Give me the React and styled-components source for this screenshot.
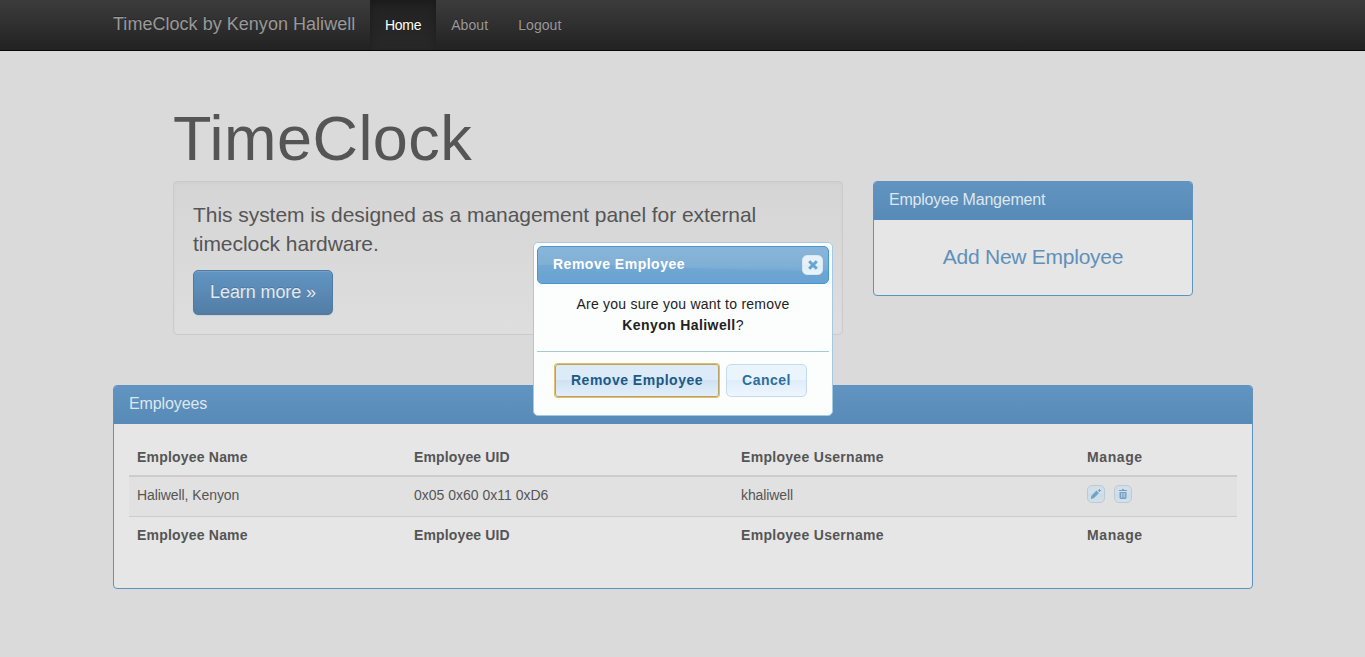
import React from "react";
import styled, { createGlobalStyle } from "styled-components";

const GlobalStyle = createGlobalStyle`
  * { box-sizing: border-box; }
  body {
    margin: 0;
    background: #dadada;
    color: #555;
    font: 14px/20px "Liberation Sans", Arial, sans-serif;
    overflow: hidden;
  }
  a { text-decoration: none; color: inherit; }
`;

const Navbar = styled.nav`
  display: flex;
  height: 51px;
  padding-left: 113px;
  background: linear-gradient(#3c3c3c, #222);
  border-bottom: 1px solid #080808;
`;

const Brand = styled.a`
  width: 257px;
  padding-top: 14px;
  font-size: 18px;
  letter-spacing: 0.03px;
  color: #999;
  white-space: nowrap;
  text-shadow: 0 -1px 0 rgba(0, 0, 0, 0.25);
`;

const NavLink = styled.a`
  height: 50px;
  padding: 15px 15px 0;
  letter-spacing: ${(p) => p.$spacing || 0}px;
  color: ${(p) => (p.$active ? "#fff" : "#999")};
  background: ${(p) => (p.$active ? "linear-gradient(#222, #282828)" : "none")};
  box-shadow: ${(p) => (p.$active ? "inset 0 3px 9px rgba(0, 0, 0, 0.25)" : "none")};
  text-shadow: 0 -1px 0 rgba(0, 0, 0, 0.25);
`;

const Page = styled.main`
  padding: 56px 112px 0 113px;
`;

const Hero = styled.section`
  padding: 0 60px;
`;

const Title = styled.h1`
  margin: 0 0 11px;
  font-size: 63px;
  font-weight: 400;
  line-height: 63px;
  letter-spacing: 0.45px;
`;

const Columns = styled.div`
  display: grid;
  grid-template-columns: 670px 320px;
  gap: 30px;
  align-items: start;
`;

const Well = styled.div`
  height: 154px;
  padding: 18px 19px 19px;
  border: 1px solid #cbcbcb;
  border-radius: 4px;
  background: linear-gradient(#d5d5d5, #dedede);
  box-shadow: inset 0 1px 3px rgba(0, 0, 0, 0.04);
`;

const Lead = styled.p`
  width: 600px;
  margin: 0 0 12px;
  font-size: 21px;
  line-height: 29px;
  letter-spacing: -0.05px;
`;

const LearnMore = styled.a`
  display: block;
  width: 140px;
  height: 45px;
  border: 1px solid #4d7ba3;
  border-radius: 5px;
  background: linear-gradient(#6295c3, #527da5);
  box-shadow: inset 0 1px 0 rgba(255, 255, 255, 0.12), 0 1px 1px rgba(0, 0, 0, 0.06);
  color: #e4e9ee;
  font-size: 18px;
  line-height: 43px;
  letter-spacing: -0.1px;
  text-align: center;
  text-shadow: 0 -1px 0 rgba(0, 0, 0, 0.18);
`;

const Panel = styled.section`
  height: ${(p) => p.$height}px;
  border: 1px solid #5f92bd;
  border-radius: 4px;
  background: #e6e6e6;
  overflow: hidden;
`;

const PanelHeading = styled.h3`
  height: 38px;
  margin: 0;
  padding: 8px 15px 0;
  background: linear-gradient(#6194c1, #578ab7);
  color: #dfe7ee;
  font-size: 16px;
  font-weight: 400;
  line-height: 20px;
  letter-spacing: ${(p) => p.$spacing || 0}px;
`;

const AddLink = styled.a`
  display: block;
  padding-top: 22px;
  color: #6090ba;
  font-size: 21px;
  line-height: 30px;
  letter-spacing: -0.25px;
  text-align: center;
`;

const EmployeePanel = styled.div`
  margin-top: 50px;
`;

const Table = styled.div`
  margin: 15px 15px 0;
`;

const Row = styled.div`
  display: grid;
  grid-template-columns: 277px 327px 346px 158px;
  height: ${(p) => (p.$striped ? 40 : 38)}px;
  padding-top: 8px;
  font-weight: ${(p) => (p.$striped ? 400 : 700)};
  background: ${(p) => (p.$striped ? "#e1e1e1" : "transparent")};
  border-bottom: ${(p) => p.$rule || 0}px solid #cccccc;
`;

const Cell = styled.div`
  padding: 0 8px;
  letter-spacing: ${(p) => p.$spacing || 0}px;
  white-space: nowrap;
`;

const Actions = styled(Cell)`
  display: flex;
  gap: 9px;
`;

const IconButton = styled.button`
  display: grid;
  place-items: center;
  width: 18px;
  height: 18px;
  padding: 0;
  border: 1px solid #b8cbd9;
  border-radius: 5px;
  background: linear-gradient(#d3dfe8 50%, #cbdce8 50%, #d4e0e9);
  color: #74a1c6;
`;

const Dialog = styled.div`
  position: fixed;
  left: 533px;
  top: 242px;
  width: 300px;
  height: 174px;
  padding: 3px;
  border: 1px solid #a6c9e2;
  border-radius: 5px;
  background: #fcfdfd;
  color: #222;
`;

const DialogTitle = styled.div`
  position: relative;
  display: flex;
  justify-content: space-between;
  height: 38px;
  padding: 7px 5px 0 15px;
  border: 1px solid #4297d7;
  border-radius: 5px;
  background: linear-gradient(#8ab5d9, #80b0d6 50%, #6fa7d3 75%, #6da5d2);
  color: #fff;
  font-weight: 700;
  letter-spacing: 0.5px;
  overflow: hidden;
`;

const Gloss = styled.svg`
  position: absolute;
  inset: 0;
  width: 100%;
  height: 100%;
`;

const TitleText = styled.span`
  position: relative;
`;

const CloseButton = styled.button`
  position: relative;
  display: grid;
  place-items: center;
  width: 21px;
  height: 20px;
  margin-top: 1px;
  padding: 0 0 0 1px;
  border: 1px solid #d5e7f5;
  border-radius: 5px;
  background: linear-gradient(#e7f1fa 50%, #deedf9 50%, #eaf4fc);
  color: #68a4d2;
`;

const Message = styled.p`
  height: 67px;
  margin: 0;
  padding-top: 10px;
  line-height: 21px;
  letter-spacing: 0.25px;
  text-align: center;

  b { letter-spacing: 0.4px; }
`;

const ButtonPane = styled.div`
  display: flex;
  gap: 7px;
  padding: 12px 0 0 18px;
  border-top: 1px solid #a6c9d8;
`;

const DialogButton = styled.button`
  width: ${(p) => p.$width}px;
  height: 33px;
  padding: 0 0 1px;
  border: 1px solid ${(p) => (p.$focused ? "#b5a565" : "#c5dbec")};
  border-radius: ${(p) => (p.$focused ? 3 : 5)}px;
  background: ${(p) =>
    p.$focused
      ? "linear-gradient(#dcebf7 48%, #cfe2f2 50%, #e3effa)"
      : "linear-gradient(#e9f4fd 48%, #deedfa 50%, #eef6fe)"};
  box-shadow: ${(p) => (p.$focused ? "0 0 0 1px #e6bd67" : "none")};
  color: ${(p) => (p.$focused ? "#1d5987" : "#2e6e9e")};
  font: 700 14px/20px "Liberation Sans", Arial, sans-serif;
  letter-spacing: 0.5px;
`;

const PencilIcon = () => (
  <svg width="10" height="10" viewBox="0 0 10 10" fill="currentColor">
    <path d="M0 10V8l1-2 4.5-4.5 2.5 2.5L3.5 8.5 2 9.5zM7 1h1V0h1v1h1v1H9v1H8V2H7z" />
  </svg>
);

const TrashIcon = () => (
  <svg width="10" height="10" viewBox="0 0 10 10" fill="currentColor">
    <path d="M1 1h3V0h2v1h3v1H1z" />
    <path fillRule="evenodd" d="M1.5 3h7v6l-1 1h-5l-1-1zM3 4v4.5h.7V4zM4.7 4v4.5h.7V4zM6.4 4v4.5h.7V4z" />
  </svg>
);

const CloseIcon = () => (
  <svg width="10" height="10" viewBox="0 0 10 10" fill="none" stroke="currentColor" strokeWidth="3">
    <path d="m1.2 1.2 7.6 7.6M8.8 1.2 1.2 8.8" />
  </svg>
);

const HeadingRow = ({ rule }) => (
  <Row $rule={rule}>
    <Cell $spacing={0.2}>Employee Name</Cell>
    <Cell $spacing={0.14}>Employee UID</Cell>
    <Cell $spacing={0.3}>Employee Username</Cell>
    <Cell $spacing={0.6}>Manage</Cell>
  </Row>
);

export default function App() {
  return (
    <>
      <GlobalStyle />
      <Navbar>
        <Brand href="#">TimeClock by Kenyon Haliwell</Brand>
        <NavLink href="#" $active $spacing={-0.3}>Home</NavLink>
        <NavLink href="#" $spacing={0.1}>About</NavLink>
        <NavLink href="#" $spacing={0.05}>Logout</NavLink>
      </Navbar>
      <Page>
        <Hero>
          <Title>TimeClock</Title>
          <Columns>
            <Well>
              <Lead>This system is designed as a management panel for external timeclock hardware.</Lead>
              <LearnMore href="#">Learn more »</LearnMore>
            </Well>
            <Panel $height={115}>
              <PanelHeading $spacing={-0.22}>Employee Mangement</PanelHeading>
              <AddLink href="#">Add New Employee</AddLink>
            </Panel>
          </Columns>
        </Hero>
        <EmployeePanel>
          <Panel $height={204}>
            <PanelHeading $spacing={-0.12}>Employees</PanelHeading>
            <Table>
              <HeadingRow rule={2} />
              <Row $striped $rule={1}>
                <Cell $spacing={-0.08}>Haliwell, Kenyon</Cell>
                <Cell>0x05 0x60 0x11 0xD6</Cell>
                <Cell $spacing={-0.1}>khaliwell</Cell>
                <Actions>
                  <IconButton aria-label="Edit"><PencilIcon /></IconButton>
                  <IconButton aria-label="Remove"><TrashIcon /></IconButton>
                </Actions>
              </Row>
              <HeadingRow />
            </Table>
          </Panel>
        </EmployeePanel>
      </Page>
      <Dialog role="dialog">
        <DialogTitle>
          <Gloss viewBox="0 0 290 36" preserveAspectRatio="none">
            <path d="M0 18C80 16 160 23 290 24V36H0z" fill="#6aa3d1" opacity=".55" />
          </Gloss>
          <TitleText>Remove Employee</TitleText>
          <CloseButton aria-label="Close"><CloseIcon /></CloseButton>
        </DialogTitle>
        <Message>
          Are you sure you want to remove<br />
          <b>Kenyon Haliwell</b>?
        </Message>
        <ButtonPane>
          <DialogButton $width={164} $focused>Remove Employee</DialogButton>
          <DialogButton $width={81}>Cancel</DialogButton>
        </ButtonPane>
      </Dialog>
    </>
  );
}
